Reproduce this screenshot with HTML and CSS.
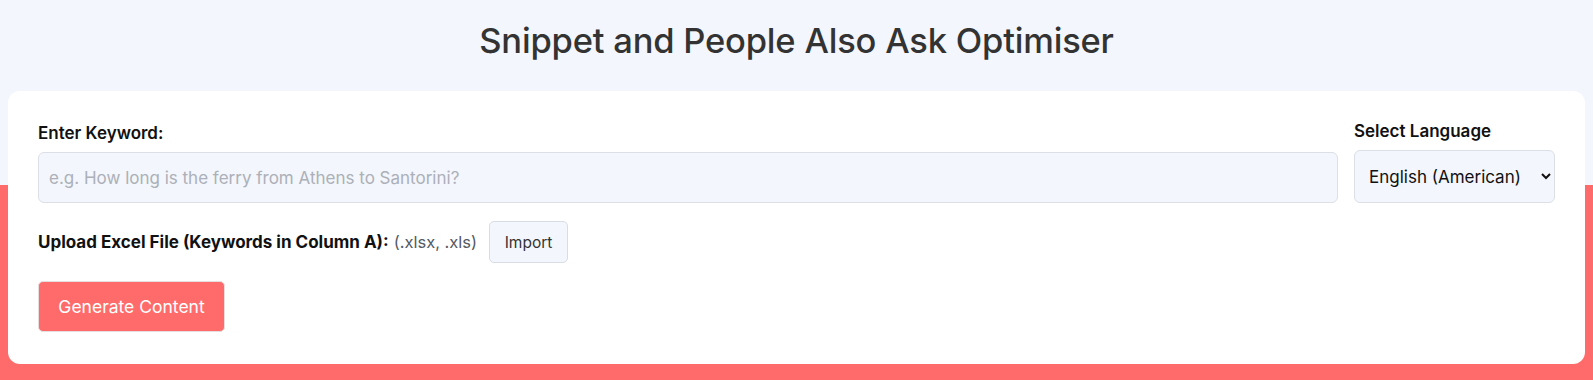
FILE: index.html
```html
<!DOCTYPE html>
<html lang="en">
<head>
<meta charset="utf-8">
<title>Snippet and People Also Ask Optimiser</title>
<link rel="stylesheet" href="styles.css">
</head>
<body>
<div class="page">
  <h1 class="title">Snippet and People Also Ask Optimiser</h1>
  <div class="card">
    <div class="row-top">
      <div class="field field-grow">
        <label class="label" for="kw">Enter Keyword:</label>
        <input id="kw" class="input" type="text" placeholder="e.g. How long is the ferry from Athens to Santorini?">
      </div>
      <div class="field field-lang">
        <label class="label" for="lang">Select Language</label>
        <select id="lang" class="select">
          <option>English (American)</option>
          <option>English (British)</option>
        </select>
      </div>
    </div>
    <div class="row-upload">
      <span class="upload-label">Upload Excel File (Keywords in Column A):</span>
      <span class="upload-hint">(.xlsx, .xls)</span>
      <button class="btn-import" type="button">Import</button>
    </div>
    <div class="row-actions">
      <button class="btn-generate" type="button">Generate Content</button>
    </div>
  </div>
</div>
</body>
</html>
```

FILE: styles.css
```css
html, body {
  margin: 0;
  padding: 0;
}
body {
  font-family: Inter, "Noto Sans", "Liberation Sans", sans-serif;
  background: linear-gradient(to bottom, #f3f6fc 0, #f3f6fc 185px, #ff6b6b 185px, #ff6b6b 100%);
  min-height: 380px;
  color: #222;
}
.page {
  padding: 0 8px;
}
.title {
  margin: 0;
  height: 91px;
  display: flex;
  align-items: center;
  justify-content: center;
  font-size: 34.5px;
  font-weight: 500;
  color: #333;
  letter-spacing: -0.2px;
  padding-bottom: 10px;
  box-sizing: border-box;
}
.card {
  background: #ffffff;
  border-radius: 12px;
  padding: 29px 30px 32px 30px;
}
.row-top {
  display: flex;
  gap: 16px;
  align-items: flex-end;
}
.field {
  display: flex;
  flex-direction: column;
}
.field-grow {
  flex: 1;
}
.field-lang {
  width: 201px;
}
.label {
  font-size: 17px;
  font-weight: 600;
  color: #111;
  margin-bottom: 8px;
  line-height: 22px;
}
.input {
  height: 51px;
  box-sizing: border-box;
  border: 1px solid #dcdfe6;
  border-radius: 6px;
  background: #f3f6fc;
  padding: 0 10px;
  font-family: inherit;
  font-size: 17px;
  color: #222;
  outline: none;
}
.input::placeholder {
  color: #acb0b8;
}
.select {
  height: 53px;
  box-sizing: border-box;
  border: 1px solid #dcdfe6;
  border-radius: 6px;
  background: #f3f6fc;
  padding: 0 6px 0 10px;
  font-family: inherit;
  font-size: 17px;
  color: #111;
  outline: none;
}
.row-upload {
  display: flex;
  align-items: center;
  margin-top: 18px;
}
.upload-label {
  font-size: 17px;
  font-weight: 700;
  color: #111;
}
.upload-hint {
  font-size: 16.5px;
  color: #555a63;
  margin-left: 5px;
}
.btn-import {
  margin-left: 12px;
  height: 42px;
  width: 79px;
  border: 1px solid #d8dce4;
  border-radius: 5px;
  background: #f3f6fc;
  font-family: inherit;
  font-size: 15.5px;
  color: #333;
  cursor: pointer;
}
.row-actions {
  margin-top: 18px;
  display: flex;
}
.btn-generate {
  height: 51px;
  width: 187px;
  border: 1px solid #e6dede;
  border-radius: 5px;
  background: #ff6b6b;
  color: #ffffff;
  font-family: inherit;
  font-size: 17.5px;
  cursor: pointer;
}
```
